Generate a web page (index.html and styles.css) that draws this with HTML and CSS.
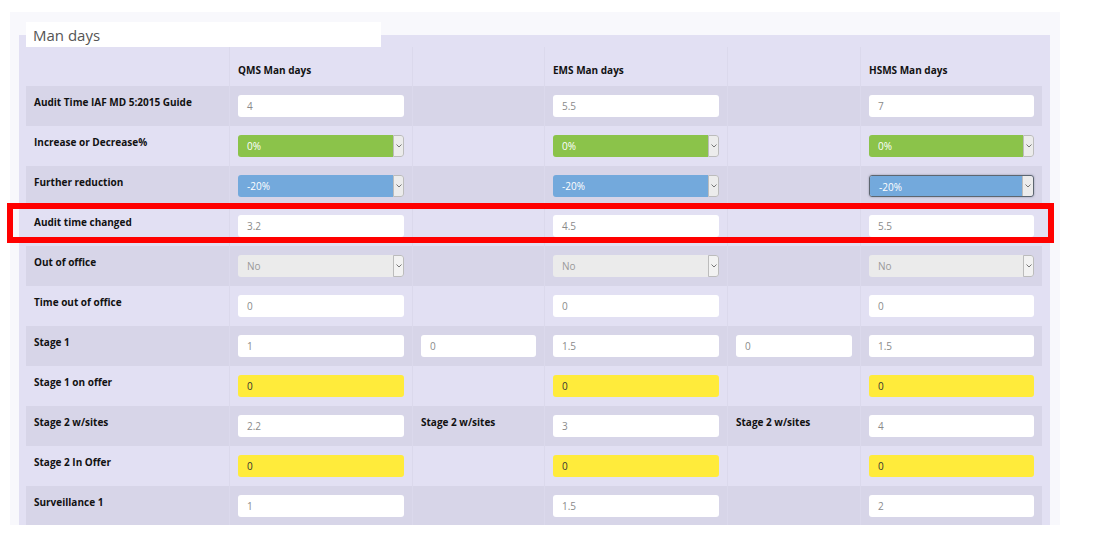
FILE: index.html
```html
<!DOCTYPE html>
<html>
<head>
<meta charset="utf-8">
<link rel="stylesheet" href="styles.css">
</head>
<body>
<div class="wrap">
  <div class="panel">
    <div class="legend">Man days</div>
    <table class="grid">
      <colgroup>
        <col class="c-label"><col class="c-main"><col class="c-gap"><col class="c-main"><col class="c-gap2"><col class="c-last">
      </colgroup>
      <thead>
        <tr class="head">
          <th class="first"></th><th>QMS Man days</th><th></th><th>EMS Man days</th><th></th><th>HSMS Man days</th>
        </tr>
      </thead>
      <tbody>
        <tr class="dark">
          <td class="first lbl">Audit Time IAF MD 5:2015 Guide</td>
          <td><div class="inp">4</div></td><td></td>
          <td><div class="inp">5.5</div></td><td></td>
          <td><div class="inp">7</div></td>
        </tr>
        <tr>
          <td class="first lbl">Increase or Decrease%</td>
          <td><div class="sel green"><span class="val">0%</span><span class="btn"><svg width="6" height="4" viewBox="0 0 6 4"><polyline points="0.5,0.5 3,3 5.5,0.5" fill="none" stroke="#777" stroke-width="1"/></svg></span></div></td><td></td>
          <td><div class="sel green"><span class="val">0%</span><span class="btn"><svg width="6" height="4" viewBox="0 0 6 4"><polyline points="0.5,0.5 3,3 5.5,0.5" fill="none" stroke="#777" stroke-width="1"/></svg></span></div></td><td></td>
          <td><div class="sel green"><span class="val">0%</span><span class="btn"><svg width="6" height="4" viewBox="0 0 6 4"><polyline points="0.5,0.5 3,3 5.5,0.5" fill="none" stroke="#777" stroke-width="1"/></svg></span></div></td>
        </tr>
        <tr class="dark">
          <td class="first lbl">Further reduction</td>
          <td><div class="sel blue"><span class="val">-20%</span><span class="btn"><svg width="6" height="4" viewBox="0 0 6 4"><polyline points="0.5,0.5 3,3 5.5,0.5" fill="none" stroke="#777" stroke-width="1"/></svg></span></div></td><td></td>
          <td><div class="sel blue"><span class="val">-20%</span><span class="btn"><svg width="6" height="4" viewBox="0 0 6 4"><polyline points="0.5,0.5 3,3 5.5,0.5" fill="none" stroke="#777" stroke-width="1"/></svg></span></div></td><td></td>
          <td><div class="sel blue focus"><span class="val">-20%</span><span class="btn"><svg width="6" height="4" viewBox="0 0 6 4"><polyline points="0.5,0.5 3,3 5.5,0.5" fill="none" stroke="#777" stroke-width="1"/></svg></span></div></td>
        </tr>
        <tr>
          <td class="first lbl">Audit time changed</td>
          <td><div class="inp">3.2</div></td><td></td>
          <td><div class="inp">4.5</div></td><td></td>
          <td><div class="inp">5.5</div></td>
        </tr>
        <tr class="dark">
          <td class="first lbl">Out of office</td>
          <td><div class="sel off"><span class="val">No</span><span class="btn"><svg width="6" height="4" viewBox="0 0 6 4"><polyline points="0.5,0.5 3,3 5.5,0.5" fill="none" stroke="#777" stroke-width="1"/></svg></span></div></td><td></td>
          <td><div class="sel off"><span class="val">No</span><span class="btn"><svg width="6" height="4" viewBox="0 0 6 4"><polyline points="0.5,0.5 3,3 5.5,0.5" fill="none" stroke="#777" stroke-width="1"/></svg></span></div></td><td></td>
          <td><div class="sel off"><span class="val">No</span><span class="btn"><svg width="6" height="4" viewBox="0 0 6 4"><polyline points="0.5,0.5 3,3 5.5,0.5" fill="none" stroke="#777" stroke-width="1"/></svg></span></div></td>
        </tr>
        <tr>
          <td class="first lbl">Time out of office</td>
          <td><div class="inp">0</div></td><td></td>
          <td><div class="inp">0</div></td><td></td>
          <td><div class="inp">0</div></td>
        </tr>
        <tr class="dark">
          <td class="first lbl">Stage 1</td>
          <td><div class="inp">1</div></td>
          <td><div class="inp">0</div></td>
          <td><div class="inp">1.5</div></td>
          <td><div class="inp">0</div></td>
          <td><div class="inp">1.5</div></td>
        </tr>
        <tr>
          <td class="first lbl">Stage 1 on offer</td>
          <td><div class="inp yellow">0</div></td><td></td>
          <td><div class="inp yellow">0</div></td><td></td>
          <td><div class="inp yellow">0</div></td>
        </tr>
        <tr class="dark">
          <td class="first lbl">Stage 2 w/sites</td>
          <td><div class="inp">2.2</div></td>
          <td class="lbl">Stage 2 w/sites</td>
          <td><div class="inp">3</div></td>
          <td class="lbl">Stage 2 w/sites</td>
          <td><div class="inp">4</div></td>
        </tr>
        <tr>
          <td class="first lbl">Stage 2 In Offer</td>
          <td><div class="inp yellow">0</div></td><td></td>
          <td><div class="inp yellow">0</div></td><td></td>
          <td><div class="inp yellow">0</div></td>
        </tr>
        <tr class="dark">
          <td class="first lbl">Surveillance 1</td>
          <td><div class="inp">1</div></td><td></td>
          <td><div class="inp">1.5</div></td><td></td>
          <td><div class="inp">2</div></td>
        </tr>
      </tbody>
    </table>
  </div>
</div>
<div class="highlight"></div>
</body>
</html>
```
FILE: styles.css
```css
html, body {
  margin: 0;
  padding: 0;
  background: #ffffff;
  font-family: "Open Sans", "Noto Sans", sans-serif;
}
.wrap {
  margin: 12px 0 0 10px;
  width: 1050px;
  height: 513px;
  padding-top: 23px;
  box-sizing: border-box;
  background: #f8f8fc;
  overflow: hidden;
}
.panel {
  margin-left: 9px;
  width: 1031px;
  height: 500px;
  padding: 0 8px 0 7px;
  box-sizing: border-box;
  background: #e2e0f3;
  display: flex;
  flex-direction: column;
}
.legend {
  margin-top: -13px;
  width: 355px;
  height: 25px;
  box-sizing: border-box;
  background: #ffffff;
  color: #555;
  font-size: 15px;
  line-height: 27px;
  padding-left: 7px;
  flex: none;
}
.grid {
  width: 1016px;
  table-layout: fixed;
  border-collapse: separate;
  border-spacing: 0;
  flex: none;
}
.c-label { width: 203px; }
.c-main { width: 183px; }
.c-gap { width: 132px; }
.c-gap2 { width: 133px; }
.c-last { width: 182px; }
.grid th, .grid td {
  border-left: 1px solid #dbd9ec;
  padding: 9px 8px;
  vertical-align: top;
  text-align: left;
  height: 21.8px;
}
.grid th.first, .grid td.first {
  border-left: none;
}
.grid th {
  font-size: 10px;
  font-weight: 700;
  color: #111;
  line-height: 14px;
  padding-top: 16px;
  height: 14px;
}
.grid tr.dark td {
  background: #d7d5e8;
}
.lbl {
  font-size: 10px;
  font-weight: 700;
  color: #111;
  line-height: 14px;
}
.inp {
  height: 22px;
  box-sizing: border-box;
  background: #ffffff;
  border-radius: 3px;
  font-size: 10px;
  line-height: 22px;
  color: #8a8a8a;
  padding-left: 9px;
}
.inp.yellow {
  background: #ffeb3b;
  color: #333;
}
.sel {
  height: 22px;
  box-sizing: border-box;
  border-radius: 3px;
  display: flex;
  overflow: hidden;
  font-size: 10px;
  line-height: 22px;
}
.sel .val {
  flex: 1;
  padding-left: 9px;
  color: #ffffff;
}
.sel .btn {
  width: 11px;
  flex: none;
  box-sizing: border-box;
  background: #ececec;
  border: 1px solid #bcbcbc;
  border-radius: 0 3px 3px 0;
  display: flex;
  align-items: center;
  justify-content: center;
}
.sel.green .val { background: #8bc34a; }
.sel.blue .val { background: #73a9dc; }
.sel.off .val { background: #ebebeb; color: #999; }
.sel.off .btn { background: #f2f2f2; }
.sel.focus {
  border: 1px solid #5d6670;
  box-shadow: 0 0 2px rgba(60, 70, 90, 0.5);
}
.sel.focus .btn {
  border: none;
  border-left: 1px solid #bcbcbc;
}
.highlight {
  position: absolute;
  left: 7px;
  top: 203px;
  width: 1047px;
  height: 40px;
  box-sizing: border-box;
  border: 6px solid #ff0000;
}
```
